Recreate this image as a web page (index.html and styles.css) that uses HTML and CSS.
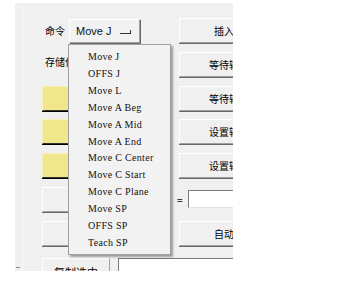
FILE: index.html
```html
<!DOCTYPE html>
<html lang="zh">
<head>
    <meta charset="UTF-8">
    <title>命令编辑</title>
    <link rel="stylesheet" href="styles.css">
</head>
<body>
<div class="panel">
    <div class="grid">
        <div class="cmd-row">
            <span class="label">命令</span>
            <div class="combo">
                <span class="combo-text">Move J</span>
                <span class="combo-arrow"></span>
            </div>
        </div>
        <div class="btn wide">插入点</div>

        <div class="store-row"><span class="label">存储位置</span></div>
        <div class="btn wide">等待输入</div>

        <div class="btn yellow"></div>
        <div class="btn wide">等待输出</div>

        <div class="btn yellow"></div>
        <div class="btn wide">设置输出</div>

        <div class="btn yellow"></div>
        <div class="btn wide">设置输出</div>

        <div class="btn"></div>
        <div class="eq-row">
            <span class="eq">=</span>
            <span class="edit"></span>
        </div>

        <div class="btn"></div>
        <div class="btn wide">自动化</div>

        <div class="btn copy">复制选中</div>
        <div class="edit bottom-edit"></div>
    </div>

    <ul class="dropdown">
        <li>Move J</li>
        <li>OFFS J</li>
        <li>Move L</li>
        <li>Move A Beg</li>
        <li>Move A Mid</li>
        <li>Move A End</li>
        <li>Move C Center</li>
        <li>Move C Start</li>
        <li>Move C Plane</li>
        <li>Move SP</li>
        <li>OFFS SP</li>
        <li>Teach SP</li>
    </ul>
    <span class="tick"></span>
</div>
</body>
</html>
```

FILE: styles.css
```css
*{
    margin: 0;
    padding: 0;
    list-style: none;
    box-sizing: border-box;
}
body{
    background: #fff;
    padding: 3px 0 0 15px;
    font-family: "Noto Sans CJK SC", "Liberation Sans", sans-serif;
    color: #000;
}
.panel{
    position: relative;
    width: 218px;
    height: 268px;
    overflow: hidden;
    background: #f0f0f0 linear-gradient(to right, transparent 7px, #f9f9f9 7px, #f9f9f9 8px, transparent 8px) no-repeat 0 3px;
}
.grid{
    display: grid;
    grid-template-columns: 68px 69px 100px;
    grid-auto-rows: 25px;
    row-gap: 8.75px;
    padding: 15px 0 0 27px;
    width: 300px;
}
.grid > .btn{
    grid-column: 1;
}
.grid > .btn.wide,
.grid > .eq-row{
    grid-column: 3;
}
.grid > .cmd-row,
.grid > .store-row{
    grid-column: 1 / 3;
}
.grid > .bottom-edit{
    grid-column: 2 / 4;
}
.label{
    font-size: 10px;
    line-height: 14px;
    white-space: nowrap;
}
.cmd-row{
    display: flex;
    align-items: center;
    padding-left: 3px;
    padding-top: 1px;
}
.cmd-row .label{
    width: 24px;
}
.combo{
    display: flex;
    align-items: center;
    width: 71px;
    height: 24px;
    padding-left: 6px;
    background: #f2f2f2;
    border-top: 1px solid #fff;
    border-left: 1px solid #fff;
    border-right: 1px solid #a0a0a0;
    border-bottom: 1px solid #a0a0a0;
    box-shadow: 1px 1px 0 #696969;
}
.combo-text{
    font-family: "Liberation Sans", sans-serif;
    font-size: 11px;
    color: #111;
}
.combo-arrow{
    width: 11px;
    height: 4px;
    margin-left: 9px;
    margin-top: 2px;
    border-bottom: 1px solid #333;
    border-right: 1px solid #333;
}
.store-row{
    display: flex;
    align-items: center;
    padding-left: 3px;
    padding-bottom: 4px;
}
.btn{
    width: 68px;
    height: 25px;
    display: flex;
    align-items: center;
    justify-content: center;
    font-size: 10px;
    white-space: nowrap;
    overflow: hidden;
    background: #f0f0f0;
    border-top: 1px solid #fff;
    border-left: 1px solid #fff;
    border-right: 1px solid #a0a0a0;
    border-bottom: 1px solid #a0a0a0;
    box-shadow: 0 1px 0 #696969;
}
.btn.wide{
    width: 100px;
}
.btn.yellow{
    background: #f0e68c;
    border-top-color: #f7f0b8;
    border-left-color: #f7f0b8;
    border-bottom-color: #333;
    box-shadow: 0 1px 0 #000;
}
.btn.copy{
    margin-top: 4px;
    font-size: 11px;
    padding-top: 2px;
}
.eq-row{
    display: flex;
    align-items: center;
}
.eq{
    font-size: 10px;
    margin-left: -2px;
    width: 11px;
}
.edit{
    display: block;
    width: 60px;
    height: 18px;
    background: #fff;
    border-top: 1px solid #7a7a7a;
    border-left: 1px solid #7a7a7a;
    border-right: 1px solid #e3e3e3;
    border-bottom: 1px solid #e3e3e3;
}
.bottom-edit{
    margin-top: 4px;
    margin-left: 8px;
    width: 140px;
    height: 30px;
}
.dropdown{
    position: absolute;
    left: 53px;
    top: 41px;
    width: 103px;
    padding: 4px 0 2px 19px;
    background: #f2f2f2;
    border: 1px solid #a0a0a0;
    box-shadow: 2px 2px 2px rgba(0,0,0,.35);
}
.dropdown li{
    font-family: "Liberation Serif", serif;
    font-size: 10px;
    letter-spacing: 0.3px;
    line-height: 16.9px;
    white-space: nowrap;
    color: #111;
}
.tick{
    position: absolute;
    left: 1px;
    top: 264px;
    width: 4px;
    height: 1px;
    background: #888;
}
```
